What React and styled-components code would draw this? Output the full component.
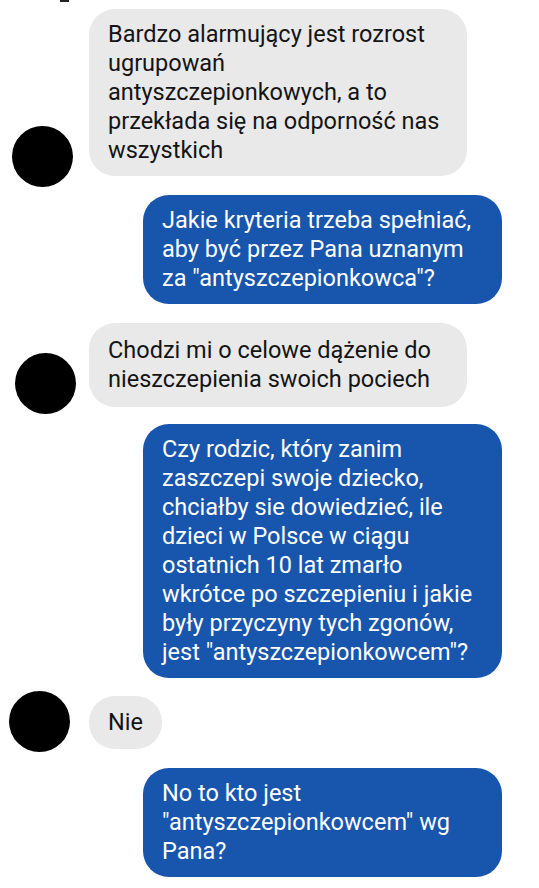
import React from 'react';
import styled, { createGlobalStyle } from 'styled-components';

const GlobalStyle = createGlobalStyle`
  body {
    margin: 0;
    background: #ffffff;
    font-family: Roboto, 'Noto Sans', 'Liberation Sans', sans-serif;
  }
`;

const Page = styled.div`
  position: relative;
  width: 539px;
  height: 888px;
  overflow: hidden;
  padding-top: 9px;
  box-sizing: border-box;
  display: flex;
  flex-direction: column;

  &::before {
    content: '';
    position: absolute;
    top: 0;
    left: 60px;
    width: 9px;
    height: 2px;
    background: #222;
  }
`;

const Row = styled.div`
  display: flex;
  align-items: flex-end;
  margin-top: ${({ top }) => top || 0}px;
  justify-content: ${({ mine }) => (mine ? 'flex-end' : 'flex-start')};
  padding-right: ${({ mine }) => (mine ? '37px' : '0')};
`;

const Avatar = styled.div`
  flex: 0 0 61px;
  width: 61px;
  height: 61px;
  border-radius: 50%;
  background: #000;
  margin-left: ${({ left }) => left}px;
  margin-right: ${({ gap }) => gap}px;
`;

const Bubble = styled.div`
  box-sizing: border-box;
  padding: ${({ pad }) => pad || 11}px 19px;
  font-size: 23.5px;
  line-height: 29px;
  border-radius: 26px;
  background: ${({ mine }) => (mine ? '#1855ad' : '#e9e9e9')};
  color: ${({ mine }) => (mine ? '#ffffff' : '#141414')};
  width: ${({ mine }) => (mine ? '359px' : 'auto')};
  max-width: 378px;
  margin-bottom: ${({ drop }) => drop || 0}px;
`;

const messages = [
  {
    text: 'Bardzo alarmujący jest rozrost ugrupowań antyszczepionkowych, a to przekłada się na odporność nas wszystkich',
    top: 0, left: 12, gap: 16, drop: 11,
  },
  {
    mine: true,
    text: 'Jakie kryteria trzeba spełniać, aby być przez Pana uznanym za "antyszczepionkowca"?',
    top: 8,
  },
  {
    text: 'Chodzi mi o celowe dążenie do nieszczepienia swoich pociech',
    top: 19, left: 15, gap: 13, drop: 7, pad: 13,
  },
  {
    mine: true,
    text: 'Czy rodzic, który zanim zaszczepi swoje dziecko, chciałby sie dowiedzieć, ile dzieci w Polsce w ciągu ostatnich 10 lat zmarło wkrótce po szczepieniu i jakie były przyczyny tych zgonów, jest "antyszczepionkowcem"?',
    top: 10,
  },
  {
    text: 'Nie',
    top: 13, left: 9, gap: 19, drop: 3, pad: 12,
  },
  {
    mine: true,
    text: 'No to kto jest "antyszczepionkowcem" wg Pana?',
    top: 16,
  },
];

const App = () => {
  return (
    <>
      <GlobalStyle />
      <Page>
        {messages.map((m, i) => (
          <Row key={i} mine={m.mine} top={m.top}>
            {!m.mine && <Avatar left={m.left} gap={m.gap} />}
            <Bubble mine={m.mine} drop={m.drop} pad={m.pad}>
              {m.text}
            </Bubble>
          </Row>
        ))}
      </Page>
    </>
  );
};

export default App;
